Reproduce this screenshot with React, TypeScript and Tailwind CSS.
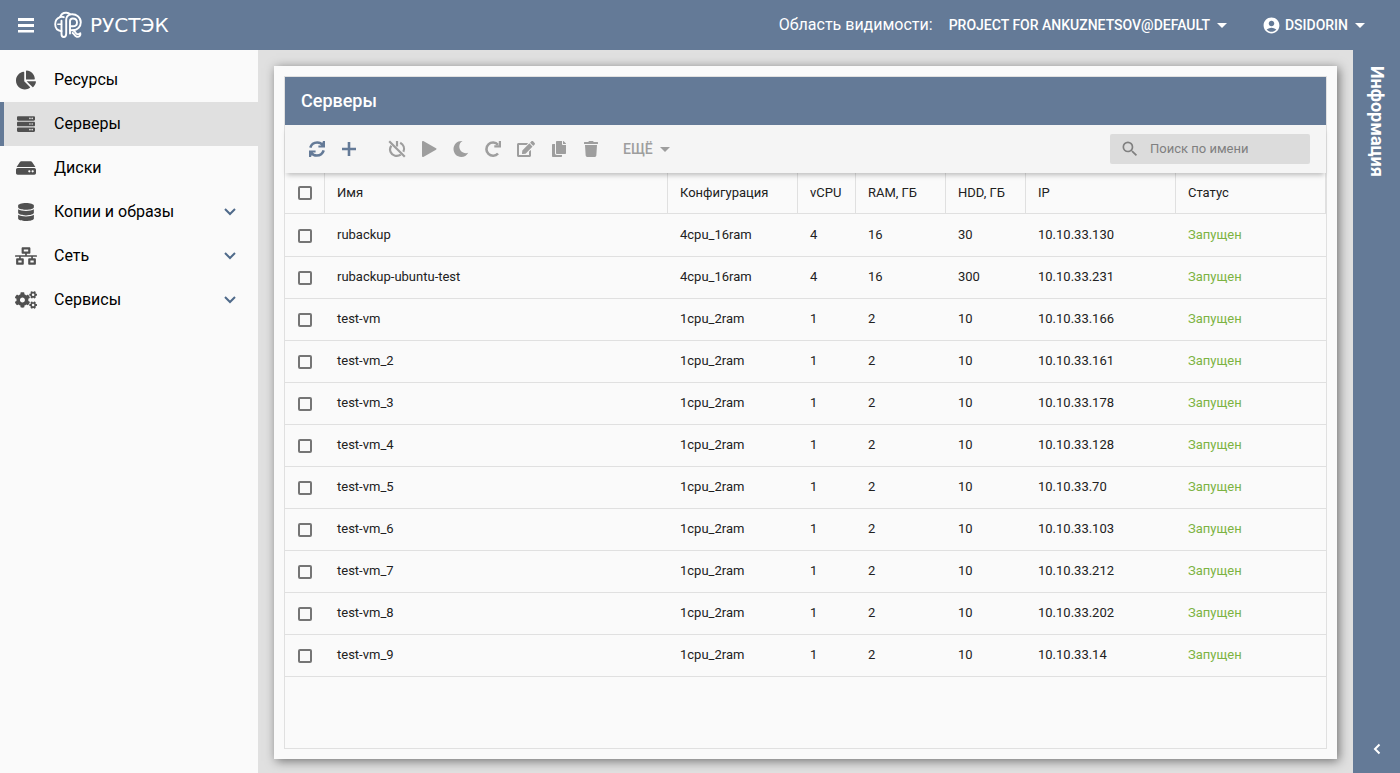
import type { ReactNode } from "react";
import {
  FaChartPie,
  FaServer,
  FaHdd,
  FaDatabase,
  FaNetworkWired,
  FaCogs,
  FaCopy,
  FaTrash,
  FaEdit,
} from "react-icons/fa";
import { MdAccountCircle, MdArrowDropDown, MdSearch } from "react-icons/md";

type NavItem = { label: string; icon: ReactNode; active?: boolean; expandable?: boolean };

const navItems: NavItem[] = [
  { label: "Ресурсы", icon: <FaChartPie size={20} /> },
  { label: "Серверы", icon: <FaServer size={18} />, active: true },
  { label: "Диски", icon: <FaHdd size={20} /> },
  { label: "Копии и образы", icon: <FaDatabase size={18} />, expandable: true },
  { label: "Сеть", icon: <FaNetworkWired size={22} />, expandable: true },
  { label: "Сервисы", icon: <FaCogs size={22} />, expandable: true },
];

const servers = [
  ["rubackup", "4cpu_16ram", 4, 16, 30, "10.10.33.130"],
  ["rubackup-ubuntu-test", "4cpu_16ram", 4, 16, 300, "10.10.33.231"],
  ["test-vm", "1cpu_2ram", 1, 2, 10, "10.10.33.166"],
  ["test-vm_2", "1cpu_2ram", 1, 2, 10, "10.10.33.161"],
  ["test-vm_3", "1cpu_2ram", 1, 2, 10, "10.10.33.178"],
  ["test-vm_4", "1cpu_2ram", 1, 2, 10, "10.10.33.128"],
  ["test-vm_5", "1cpu_2ram", 1, 2, 10, "10.10.33.70"],
  ["test-vm_6", "1cpu_2ram", 1, 2, 10, "10.10.33.103"],
  ["test-vm_7", "1cpu_2ram", 1, 2, 10, "10.10.33.212"],
  ["test-vm_8", "1cpu_2ram", 1, 2, 10, "10.10.33.202"],
  ["test-vm_9", "1cpu_2ram", 1, 2, 10, "10.10.33.14"],
];

const columns = [
  { label: "Имя", width: "" },
  { label: "Конфигурация", width: "w-[130px]" },
  { label: "vCPU", width: "w-[58px]" },
  { label: "RAM, ГБ", width: "w-[90px]" },
  { label: "HDD, ГБ", width: "w-[80px]" },
  { label: "IP", width: "w-[150px]" },
  { label: "Статус", width: "w-[150px]" },
];

function MenuIcon() {
  return (
    <svg width="16" height="16" viewBox="0 0 16 16" fill="currentColor" aria-hidden="true">
      <path d="M0 1H16V4H0ZM0 7H16V10H0ZM0 13H16V15.500H0Z" />
    </svg>
  );
}

function LogoMark() {
  return (
    <svg width="28" height="28" viewBox="0 0 28 28" fill="none" stroke="currentColor" strokeWidth="1.9" strokeLinecap="round" strokeLinejoin="round" aria-hidden="true">
      <path d="M7.500 20.200C3.500 19.600 1.200 16.800 1.200 13.200C1.200 9.900 3.200 7.300 6 6.200C7 3.300 9.400 1.500 12.400 1.700C14 1.800 15.300 2.400 16.300 3.400C22.500 2.400 26.800 6.400 26.800 11.300C26.800 15.800 23.500 19 19 19.200" />
      <path d="M6 6.200C7.200 5.700 8.600 5.700 9.800 6.200" />
      <path d="M16.300 3.400C13.500 4.200 12.200 6.300 12.200 9V22.500C12.200 24.700 11.300 26 9.800 26C8.300 26 7.500 24.700 7.500 23V9.800" />
      <path d="M3.800 13.200H7.500" strokeWidth="1.400" />
      <path d="M16.200 15.200H18.800C21.300 15.200 23 13.700 23 11.400C23 9.100 21.300 7.500 18.800 7.500C17 7.500 16 8.500 16 10.200V22.500" />
      <path d="M16.300 19.200H18.500C21.300 19.200 21.100 21.800 22.400 22.800C23.500 23.600 25.200 23.200 26.300 22.200C27 24.700 25 26.300 22.800 25.800C20.200 25.200 20.300 22.500 18.600 22" />
    </svg>
  );
}

function RefreshIcon() {
  return (
    <svg width="18" height="18" viewBox="0 0 18 18" aria-hidden="true">
      <path d="M2.300 7.600C3.300 4.500 6 2.500 9.200 2.500C11.600 2.500 13.500 3.500 14.700 5.300M15.700 10.400C14.700 13.500 12 15.500 8.800 15.500C6.400 15.500 4.500 14.500 3.300 12.700" fill="none" stroke="currentColor" strokeWidth="2.600" />
      <path d="M17 1V7.600H10.400V5.600L13.200 5.400L15 1ZM1 17V10.400H7.600V12.400L4.800 12.600L3 17Z" fill="currentColor" />
    </svg>
  );
}

function PlusIcon() {
  return (
    <svg width="16" height="16" viewBox="0 0 16 16" fill="none" stroke="currentColor" strokeWidth="2.600" aria-hidden="true">
      <path d="M8 1V15M1 8H15" />
    </svg>
  );
}

function PowerOffIcon() {
  return (
    <svg width="18" height="18" viewBox="0 0 18 18" fill="none" stroke="currentColor" strokeWidth="2.200" aria-hidden="true">
      <path d="M1.200 1.200L16.800 16.800" />
      <path d="M9 1V6.500" />
      <path d="M3.400 5.800C1.900 7.600 1.700 9.900 2.600 12C4.200 15.900 9.200 17.100 12.800 14.700" />
      <path d="M12.200 2.800C15.600 4.600 16.900 8.400 15.400 11.800" />
    </svg>
  );
}

function PlayIcon() {
  return (
    <svg width="16" height="18" viewBox="0 0 16 18" fill="currentColor" aria-hidden="true">
      <path d="M1 1.700C1 1 1.700.700 2.300 1L15 8.300C15.700 8.700 15.700 9.300 15 9.700L2.300 17C1.700 17.300 1 17 1 16.300Z" />
    </svg>
  );
}

function MoonIcon() {
  return (
    <svg width="16" height="18" viewBox="0 0 16 18" fill="currentColor" aria-hidden="true">
      <path d="M9.500 1C7.500 2.200 6.300 4.200 6.300 6.600C6.300 10.500 9.500 13.500 13.300 13.200C14 13.100 14.600 13 15.200 12.700C13.800 15.400 11.300 17 8.300 17C3.900 17 .5 13.400.5 9C.5 4.200 4.600.5 9.500 1Z" />
    </svg>
  );
}

function RestartIcon() {
  return (
    <svg width="18" height="18" viewBox="0 0 18 18" aria-hidden="true">
      <path d="M14 4.800A6.600 6.600 0 1 0 14 13.500" fill="none" stroke="currentColor" strokeWidth="2.600" />
      <path d="M17 1V7.500H10.300V5.300H14.800V1Z" fill="currentColor" />
    </svg>
  );
}

function ChevronDownIcon() {
  return (
    <svg width="12" height="8" viewBox="0 0 12 8" fill="none" stroke="currentColor" strokeWidth="2" aria-hidden="true">
      <path d="M1 1L6 6L11 1" />
    </svg>
  );
}

function ChevronLeftIcon() {
  return (
    <svg width="8" height="12" viewBox="0 0 8 12" fill="none" stroke="currentColor" strokeWidth="2" aria-hidden="true">
      <path d="M6.500 1.500L2 6L6.500 10.500" />
    </svg>
  );
}

function ToolButton({ label, primary, wide, children }: { label: string; primary?: boolean; wide?: boolean; children: ReactNode }) {
  return (
    <button
      type="button"
      aria-label={label}
      className={`flex h-8 items-center justify-center ${wide ? "w-[34px]" : "w-8"} ${primary ? "text-[#647a97]" : "text-[#9e9e9e]"}`}
    >
      {children}
    </button>
  );
}

function Checkbox({ label }: { label: string }) {
  return (
    <input
      type="checkbox"
      aria-label={label}
      className="mx-auto block size-3.5 appearance-none rounded-xs border-2 border-[#757575] checked:bg-[#647a97]"
    />
  );
}

export default function App() {
  return (
    <div className="flex h-screen flex-col bg-[#e0e0e0] font-['Roboto',sans-serif] text-[#212121]">
      <header className="flex h-[50px] shrink-0 items-center bg-[#647a97] pr-7 pl-[18px] text-white">
        <button type="button" aria-label="Меню">
          <MenuIcon />
        </button>
        <a href="#" className="ml-5 flex items-center gap-2">
          <LogoMark />
          <span className="font-['DejaVu_Sans',sans-serif] text-xl">РУСТЭК</span>
        </a>
        <span className="ml-auto">Область видимости:</span>
        <button type="button" className="ml-4 flex items-center text-sm font-medium">
          PROJECT FOR ANKUZNETSOV@DEFAULT
          <MdArrowDropDown size={24} />
        </button>
        <button type="button" className="ml-7 flex items-center text-sm font-medium">
          <MdAccountCircle size={19} className="mr-1" />
          DSIDORIN
          <MdArrowDropDown size={24} />
        </button>
      </header>

      <div className="flex min-h-0 flex-1">
        <nav className="w-[258px] shrink-0 bg-[#fafafa] pt-2">
          {navItems.map((item) => (
            <a
              key={item.label}
              href="#"
              className={
                item.active
                  ? "flex h-11 items-center border-l-4 border-[#647a97] bg-[#e0e0e0] pr-[22px]"
                  : "flex h-11 items-center border-l-4 border-transparent pr-[22px]"
              }
            >
              <span className="ml-2 flex w-7 justify-center text-[#505050]">{item.icon}</span>
              <span className="ml-3.5 flex-1 text-base text-black">{item.label}</span>
              {item.expandable && (
                <span className="text-[#4f6a8a]">
                  <ChevronDownIcon />
                </span>
              )}
            </a>
          ))}
        </nav>

        <main className="flex min-w-0 flex-1 p-4 pb-3.5">
          <div className="flex min-w-0 flex-1 bg-[#fafafa] p-2.5 shadow-[2px_2px_10px_rgba(0,0,0,0.5)]">
            <section className="flex min-w-0 flex-1 flex-col border border-[#e0e0e0]">
              <h1 className="flex h-12 shrink-0 items-center bg-[#647a97] px-4 text-lg font-medium text-white">Серверы</h1>
              <div className="z-10 flex h-12 shrink-0 items-center bg-[#f5f5f5] px-4 shadow-[0_4px_5px_-2px_rgba(0,0,0,0.25)]">
                <ToolButton label="Обновить" primary><RefreshIcon /></ToolButton>
                <ToolButton label="Создать" primary><PlusIcon /></ToolButton>
                <div className="w-4" />
                <ToolButton label="Выключить"><PowerOffIcon /></ToolButton>
                <ToolButton label="Запустить"><PlayIcon /></ToolButton>
                <ToolButton label="Приостановить"><MoonIcon /></ToolButton>
                <ToolButton label="Перезагрузить"><RestartIcon /></ToolButton>
                <ToolButton label="Изменить" wide><FaEdit size={18} /></ToolButton>
                <ToolButton label="Копировать"><FaCopy size={16} /></ToolButton>
                <ToolButton label="Удалить"><FaTrash size={16} /></ToolButton>
                <button type="button" className="ml-4 flex items-center text-sm font-medium text-[#9e9e9e]">
                  ЕЩЁ
                  <MdArrowDropDown size={24} />
                </button>
                <label className="ml-auto flex h-[30px] w-[200px] items-center gap-2.5 rounded-xs bg-[#dcdcdc] px-2.5 text-[#808080]">
                  <MdSearch size={20} className="shrink-0" />
                  <input
                    type="text"
                    aria-label="Поиск по имени"
                    placeholder="Поиск по имени"
                    className="w-full min-w-0 bg-transparent text-[13px] outline-none placeholder:text-[#808080]"
                  />
                </label>
              </div>
              <table className="w-full table-fixed border-separate border-spacing-0 text-left text-[13px]">
                <thead>
                  <tr className="h-[41px]">
                    <th className="w-10 border-r border-b border-[#e0e0e0]">
                      <Checkbox label="Выбрать все" />
                    </th>
                    {columns.map((column) => (
                      <th key={column.label} className={`${column.width} border-r border-b border-[#e0e0e0] px-3 font-normal`}>
                        {column.label}
                      </th>
                    ))}
                  </tr>
                </thead>
                <tbody>
                  {servers.map((server) => (
                    <tr key={server[0]} className="group h-[42px] first:h-[43px]">
                      <td className="border-b border-[#e0e0e0] group-first:pt-0.5">
                        <Checkbox label={`Выбрать ${server[0]}`} />
                      </td>
                      {server.map((value, index) => (
                        <td key={columns[index].label} className="border-b border-[#e0e0e0] px-3 pb-0.5 group-first:pb-0">
                          {value}
                        </td>
                      ))}
                      <td className="border-b border-[#e0e0e0] px-3 pb-0.5 text-[#7cb342] group-first:pb-0">Запущен</td>
                    </tr>
                  ))}
                </tbody>
              </table>
            </section>
          </div>
        </main>

        <aside className="flex w-[47px] shrink-0 flex-col items-center justify-between bg-[#647a97] pt-4 pb-[18px] text-white">
          <h2 className="text-lg leading-6 font-bold [writing-mode:vertical-rl]">Информация</h2>
          <button type="button" aria-label="Развернуть панель">
            <ChevronLeftIcon />
          </button>
        </aside>
      </div>
    </div>
  );
}
